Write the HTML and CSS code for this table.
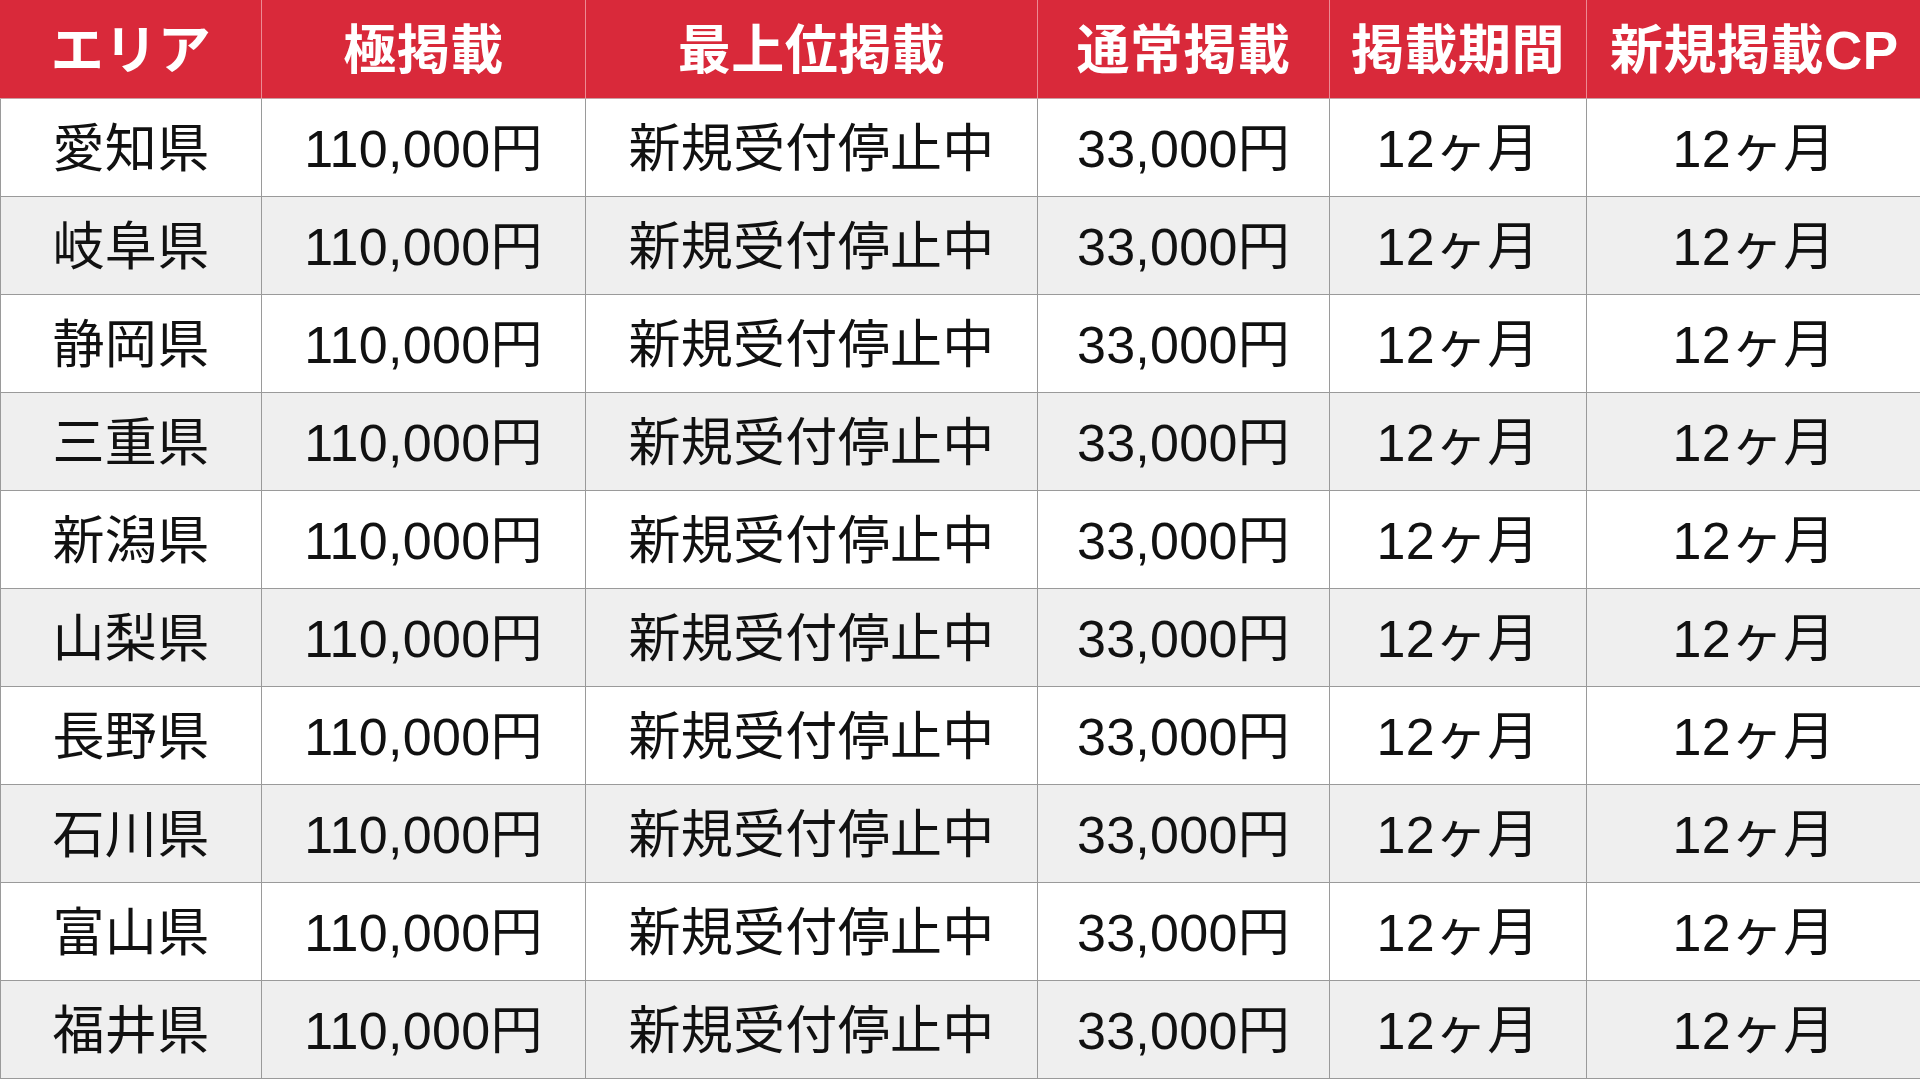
FILE: index.html
```html
<!DOCTYPE html>
<html lang="ja">
<head>
<meta charset="utf-8">
<title>掲載料金</title>
<link rel="stylesheet" href="styles.css">
</head>
<body>
<table class="price">
  <colgroup>
    <col class="c1"><col class="c2"><col class="c3"><col class="c4"><col class="c5"><col class="c6">
  </colgroup>
  <thead>
    <tr><th>エリア</th><th>極掲載</th><th>最上位掲載</th><th>通常掲載</th><th>掲載期間</th><th>新規掲載CP</th></tr>
  </thead>
  <tbody>
    <tr><td>愛知県</td><td>110,000円</td><td>新規受付停止中</td><td>33,000円</td><td>12ヶ月</td><td>12ヶ月</td></tr>
    <tr><td>岐阜県</td><td>110,000円</td><td>新規受付停止中</td><td>33,000円</td><td>12ヶ月</td><td>12ヶ月</td></tr>
    <tr><td>静岡県</td><td>110,000円</td><td>新規受付停止中</td><td>33,000円</td><td>12ヶ月</td><td>12ヶ月</td></tr>
    <tr><td>三重県</td><td>110,000円</td><td>新規受付停止中</td><td>33,000円</td><td>12ヶ月</td><td>12ヶ月</td></tr>
    <tr><td>新潟県</td><td>110,000円</td><td>新規受付停止中</td><td>33,000円</td><td>12ヶ月</td><td>12ヶ月</td></tr>
    <tr><td>山梨県</td><td>110,000円</td><td>新規受付停止中</td><td>33,000円</td><td>12ヶ月</td><td>12ヶ月</td></tr>
    <tr><td>長野県</td><td>110,000円</td><td>新規受付停止中</td><td>33,000円</td><td>12ヶ月</td><td>12ヶ月</td></tr>
    <tr><td>石川県</td><td>110,000円</td><td>新規受付停止中</td><td>33,000円</td><td>12ヶ月</td><td>12ヶ月</td></tr>
    <tr><td>富山県</td><td>110,000円</td><td>新規受付停止中</td><td>33,000円</td><td>12ヶ月</td><td>12ヶ月</td></tr>
    <tr><td>福井県</td><td>110,000円</td><td>新規受付停止中</td><td>33,000円</td><td>12ヶ月</td><td>12ヶ月</td></tr>
  </tbody>
</table>
</body>
</html>
```

FILE: styles.css
```css
html, body {
  margin: 0;
  padding: 0;
  background: #ffffff;
}

.price {
  width: 1921px;
  border-collapse: collapse;
  table-layout: fixed;
  font-family: "Liberation Sans", "Noto Sans CJK JP", sans-serif;
  color: #111111;
}

.c1 { width: 261px; }
.c2 { width: 324px; }
.c3 { width: 452px; }
.c4 { width: 292px; }
.c5 { width: 257px; }
.c6 { width: 335px; }

.price th,
.price td {
  height: 97px;
  padding: 4px 0 0;
  box-sizing: border-box;
  text-align: center;
  vertical-align: middle;
  line-height: 1;
  white-space: nowrap;
}

.price th {
  height: 98px;
  background: #d9293a;
  color: #ffffff;
  font-weight: 700;
  font-size: 53px;
  letter-spacing: 0.5px;
  border-left: 1px solid #ec8a93;
  border-bottom: 1px solid #c9a0a4;
}

.price th:first-child {
  border-left: 1px solid #d9293a;
}

.price td {
  height: 98px;
  font-size: 52px;
  font-weight: 400;
  letter-spacing: 0.3px;
  border: 1px solid #9a9a9a;
}

.price tbody tr:nth-child(even) td {
  background: #efefef;
}
```
